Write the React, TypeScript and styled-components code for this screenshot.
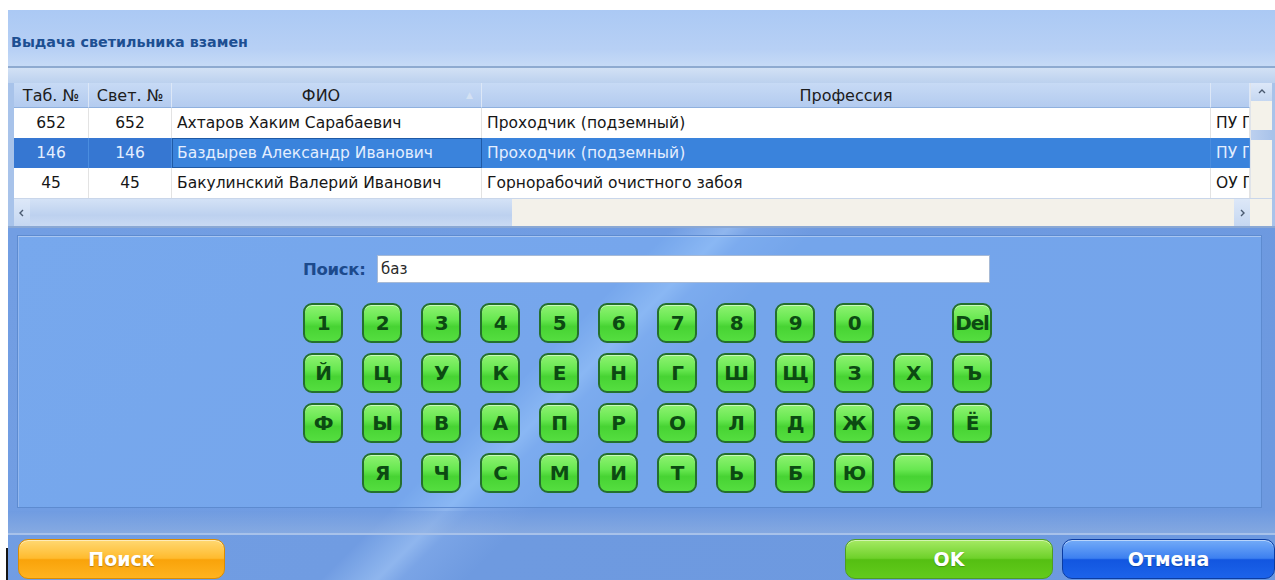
import React from "react";
import styled, { createGlobalStyle } from "styled-components";

const GlobalStyle = createGlobalStyle`
  html, body {
    margin: 0;
    padding: 0;
    background: #ffffff;
  }
  body {
    font-family: "DejaVu Sans", "Liberation Sans", sans-serif;
    overflow: hidden;
  }
`;

const Screen = styled.div`
  position: relative;
  width: 1275px;
  height: 580px;
  box-sizing: border-box;
  padding: 10px 0 0 8px;
`;

// text caret left over at the window's lower left edge
const Caret = styled.div`
  position: absolute;
  left: 6px;
  top: 548px;
  width: 2px;
  height: 32px;
  background: #151515;
`;

const Window = styled.div`
  height: 570px;
  display: flex;
  flex-direction: column;
  background: #6f9be1;
`;

const TitleBar = styled.div`
  height: 58px;
  box-sizing: border-box;
  padding: 24px 0 0 3px;
  background: linear-gradient(#abc9f4, #b7d0f5 70%, #c6daf6);
  border-bottom: 2px solid #8eaad0;
  color: #1d4f92;
  font: bold 14.3px "DejaVu Sans", sans-serif;
`;

const TitleBand = styled.div`
  height: 15px;
  background: linear-gradient(#d2e1f5, #bcd1ee);
`;

const GridArea = styled.div`
  padding: 0 3px 0 6px;
  background: #a8c3ea;
  border-bottom: 2px solid #8aa8d4;
`;

const GridBody = styled.div`
  display: flex;
`;

const Table = styled.div`
  flex: 1;
  display: grid;
  grid-template-columns: 75px 83px 310px 729px 39px;
  grid-template-rows: 25px repeat(3, 30px);
  background: #ffffff;
`;

const HeadCell = styled.div`
  display: flex;
  align-items: center;
  justify-content: center;
  box-sizing: border-box;
  padding: 0 4px;
  background: linear-gradient(#c7daf5, #b3cbef);
  border-right: 1px solid #dce7f7;
  border-bottom: 1px solid #8fb0de;
  color: #1c1c1c;
  font-size: 16px;
  white-space: nowrap;
  overflow: hidden;
`;

const HeadLabel = styled.span`
  margin-left: auto;
`;

const SortMark = styled.span`
  margin-left: auto;
  margin-right: 4px;
  color: #d4e1f3;
  font-size: 9px;
`;

const Cell = styled.div<{ $selected?: boolean; $center?: boolean; $focused?: boolean }>`
  display: flex;
  align-items: center;
  justify-content: ${(p) => (p.$center ? "center" : "flex-start")};
  box-sizing: border-box;
  padding: 0 5px;
  font-size: 15.5px;
  white-space: nowrap;
  overflow: hidden;
  color: ${(p) => (p.$selected ? "#e4eeff" : "#161616")};
  background: ${(p) =>
    p.$selected ? (p.$center ? "#3677d2" : "#3a83dc") : "#ffffff"};
  border-right: 1px solid ${(p) => (p.$selected ? "#4a8ddf" : "#e3e3e3")};
  outline: ${(p) => (p.$focused ? "1px solid #1f5aa6" : "none")};
  outline-offset: -1px;
`;

const VScroll = styled.div`
  width: 22px;
  display: flex;
  flex-direction: column;
  background: #f4f2ea;
  border-left: 1px solid #e0e4ea;
`;

const ScrollButton = styled.div<{ $size: number }>`
  flex: 0 0 ${(p) => p.$size}px;
  display: flex;
  align-items: center;
  justify-content: center;
  background: linear-gradient(#dde8f8, #c5d7f1);
`;

const VThumb = styled.div`
  height: 10px;
  margin-top: 29px;
  background: linear-gradient(90deg, #bcd0ef, #a9c3ea);
`;

const HScroll = styled.div`
  height: 28px;
  display: flex;
  background: #f3f1ea;
  border-top: 1px solid #c9d6ea;
  box-sizing: border-box;
`;

const HThumb = styled.div`
  width: 482px;
  background: linear-gradient(#d4e2f6, #bdd1ef 60%, #c9daf3);
`;

const HTrack = styled.div`
  flex: 1;
`;

const Corner = styled.div`
  width: 22px;
  background: #f4f2ea;
`;

// lower half of the window, with the diagonal glare running behind the keypad
const Lower = styled.div`
  flex: 1;
  display: flex;
  flex-direction: column;
  padding-top: 7px;
  background: linear-gradient(
    135deg,
    #729ee3 0%,
    #709ce2 41%,
    #8fb6ee 44.5%,
    #7aa4e6 46%,
    #6e9ae0 50%,
    #6d99e0 100%
  );
`;

const KeyPanel = styled.div`
  height: 273px;
  box-sizing: border-box;
  margin: 0 13px 0 9px;
  padding: 19px 0 0 285px;
  background: rgba(130, 185, 255, 0.35);
  border: 1px solid #5d8bd0;
  box-shadow: inset 0 1px 0 #a9c6f1, inset 1px 0 0 #93b7ee;
`;

const SearchRow = styled.div`
  width: 687px;
  height: 28px;
  display: flex;
  align-items: center;
`;

const SearchLabel = styled.label`
  width: 74px;
  color: #1c4a8c;
  font: bold 16.5px "DejaVu Sans", sans-serif;
  letter-spacing: -0.3px;
`;

const SearchInput = styled.input`
  flex: 1;
  height: 28px;
  box-sizing: border-box;
  padding: 0 3px;
  border: 1px solid #a7bad6;
  background: #ffffff;
  color: #2a2a2a;
  font: 15px "DejaVu Sans", sans-serif;
  outline: none;
`;

const Keys = styled.div`
  margin-top: 20px;
  display: grid;
  grid-template-columns: repeat(12, 40px);
  grid-auto-rows: 40px;
  column-gap: 19px;
  row-gap: 10px;
`;

const Key = styled.button`
  box-sizing: border-box;
  padding: 0;
  border: 2px solid #24702d;
  border-radius: 9px;
  background: linear-gradient(#8ef271 0%, #68e851 40%, #47d333 60%, #55de40 100%);
  box-shadow: inset 0 1px 0 rgba(255, 255, 255, 0.55);
  color: #0c4a12;
  font: bold 20px "DejaVu Sans", sans-serif;
  letter-spacing: -1.2px;
  overflow: hidden;
`;

const Footer = styled.div`
  height: 22px;
  margin-top: 3px;
  background: linear-gradient(rgba(110, 154, 224, 0.4), rgba(150, 180, 225, 0.55));
  border-bottom: 2px solid #a8c2ea;
`;

const ButtonRow = styled.div`
  display: flex;
  gap: 9px;
  padding: 4px 0 0 10px;
`;

const palette = {
  orange: {
    bg: "linear-gradient(#ffd872, #ffbb2e 48%, #f9a30a 52%, #ffb320)",
    border: "#dc8c00",
  },
  green: {
    bg: "linear-gradient(#a6ea64, #6ed12a 48%, #55bf12 52%, #62cb1c)",
    border: "#4f9d20",
  },
  blue: {
    bg: "linear-gradient(#74acf8, #3c7ff0 48%, #1256e0 52%, #1c63ea)",
    border: "#0b3ca2",
  },
};

const ActionButton = styled.button<{ $tone: keyof typeof palette; $width: number; $push?: boolean }>`
  width: ${(p) => p.$width}px;
  height: 40px;
  margin-left: ${(p) => (p.$push ? "auto" : "0")};
  border: 1px solid ${(p) => palette[p.$tone].border};
  border-radius: 10px;
  background: ${(p) => palette[p.$tone].bg};
  box-shadow: inset 0 1px 0 rgba(255, 255, 255, 0.5);
  color: #ffffff;
  font: bold 19px "DejaVu Sans", sans-serif;
  text-shadow: 0 1px 1px rgba(0, 0, 0, 0.25);
`;

const Chevron = ({ dir }: { dir: "up" | "left" | "right" }) => {
  const points = {
    up: "2,6 5,3 8,6",
    left: "6,2 3,5 6,8",
    right: "4,2 7,5 4,8",
  }[dir];
  return (
    <svg width="10" height="10" viewBox="0 0 10 10">
      <polyline points={points} fill="none" stroke="#4a5a70" strokeWidth="1.4" />
    </svg>
  );
};

const people = [
  { tab: "652", svet: "652", fio: "Ахтаров Хаким Сарабаевич", prof: "Проходчик (подземный)", dep: "ПУ ПЭС" },
  { tab: "146", svet: "146", fio: "Баздырев Александр Иванович", prof: "Проходчик (подземный)", dep: "ПУ ПЭС", selected: true },
  { tab: "45", svet: "45", fio: "Бакулинский Валерий Иванович", prof: "Горнорабочий очистного забоя", dep: "ОУ ПЭС" },
];

const keyRows: (string | null)[][] = [
  ["1", "2", "3", "4", "5", "6", "7", "8", "9", "0", null, "Del"],
  ["Й", "Ц", "У", "К", "Е", "Н", "Г", "Ш", "Щ", "З", "Х", "Ъ"],
  ["Ф", "Ы", "В", "А", "П", "Р", "О", "Л", "Д", "Ж", "Э", "Ё"],
  [null, "Я", "Ч", "С", "М", "И", "Т", "Ь", "Б", "Ю", " ", null],
];

export default function App() {
  return (
    <Screen>
      <GlobalStyle />
      <Window>
        <TitleBar>Выдача светильника взамен</TitleBar>
        <TitleBand />
        <GridArea>
          <GridBody>
            <Table>
              <HeadCell>Таб. №</HeadCell>
              <HeadCell>Свет. №</HeadCell>
              <HeadCell>
                <HeadLabel>ФИО</HeadLabel>
                <SortMark>▲</SortMark>
              </HeadCell>
              <HeadCell>Профессия</HeadCell>
              <HeadCell />
              {people.map((p) => (
                <React.Fragment key={p.tab}>
                  <Cell $center $selected={p.selected}>{p.tab}</Cell>
                  <Cell $center $selected={p.selected}>{p.svet}</Cell>
                  <Cell $selected={p.selected} $focused={p.selected}>{p.fio}</Cell>
                  <Cell $selected={p.selected}>{p.prof}</Cell>
                  <Cell $selected={p.selected}>{p.dep}</Cell>
                </React.Fragment>
              ))}
            </Table>
            <VScroll>
              <ScrollButton $size={18}>
                <Chevron dir="up" />
              </ScrollButton>
              <VThumb />
            </VScroll>
          </GridBody>
          <HScroll>
            <ScrollButton $size={16}>
              <Chevron dir="left" />
            </ScrollButton>
            <HThumb />
            <HTrack />
            <ScrollButton $size={16}>
              <Chevron dir="right" />
            </ScrollButton>
            <Corner />
          </HScroll>
        </GridArea>
        <Lower>
          <KeyPanel>
            <SearchRow>
              <SearchLabel htmlFor="search">Поиск:</SearchLabel>
              <SearchInput id="search" defaultValue="баз" />
            </SearchRow>
            <Keys>
              {keyRows.flatMap((row, r) =>
                row.map((k, c) =>
                  k === null ? <span key={`${r}-${c}`} /> : <Key key={`${r}-${c}`}>{k}</Key>
                )
              )}
            </Keys>
          </KeyPanel>
          <Footer />
          <ButtonRow>
            <ActionButton $tone="orange" $width={207}>Поиск</ActionButton>
            <ActionButton $tone="green" $width={208} $push>OK</ActionButton>
            <ActionButton $tone="blue" $width={213}>Отмена</ActionButton>
          </ButtonRow>
        </Lower>
      </Window>
      <Caret />
    </Screen>
  );
}
